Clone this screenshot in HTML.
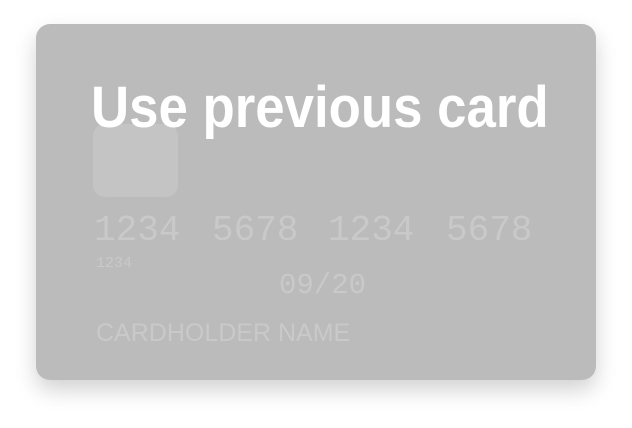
<!DOCTYPE html>
<html><head><style>
body{margin:0;width:632px;height:428px;background:#fff;overflow:hidden;position:relative;font-family:"Liberation Sans",sans-serif}
.card{position:absolute;left:36px;top:24px;width:560px;height:356px;border-radius:14px;background:#bbbbbb;box-shadow:0 10px 22px rgba(0,0,0,0.18)}
.chip{position:absolute;left:57px;top:100px;width:85px;height:73px;border-radius:12px;background:#c4c4c4}
.t{position:absolute;color:#c9c9c9;font-family:"Liberation Mono",monospace;white-space:nowrap}
.title{position:absolute;left:91px;top:73px;color:#fff;font-weight:bold;font-size:58px;line-height:70px;white-space:nowrap;transform:scaleX(0.91);transform-origin:0 0}
</style></head><body>
<div class="card">
<div class="chip"></div>
<div class="t" style="left:58px;top:187px;font-size:36px;line-height:40px">1234</div>
<div class="t" style="left:176px;top:187px;font-size:36px;line-height:40px">5678</div>
<div class="t" style="left:292px;top:187px;font-size:36px;line-height:40px">1234</div>
<div class="t" style="left:410px;top:187px;font-size:36px;line-height:40px">5678</div>
<div class="t" style="left:60px;top:232px;font-size:15px;line-height:16px">1234</div>
<div class="t" style="left:243px;top:246px;font-size:29px;line-height:32px">09/20</div>
<div class="t" style="left:60px;top:294px;font-size:25px;line-height:30px;font-family:'Liberation Sans',sans-serif">CARDHOLDER NAME</div>
</div>
<div class="title">Use previous card</div>
</body></html>
